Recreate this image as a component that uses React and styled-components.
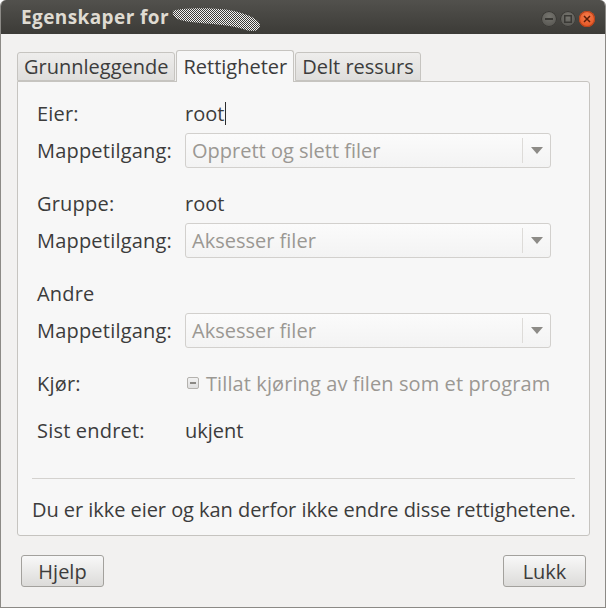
import React from "react";
import styled, { createGlobalStyle } from "styled-components";

const Global = createGlobalStyle`
  html, body { margin: 0; padding: 0; background: #ffffff; }
  body { font-family: "Open Sans", "Noto Sans", sans-serif; }
  * { box-sizing: border-box; }
`;

const Window = styled.div`
  width: 606px;
  height: 608px;
  display: flex;
  flex-direction: column;
  background: #f2f1f0;
  border: 1px solid #8c8a86;
  border-top: none;
  border-radius: 6px 6px 0 0;
  overflow: hidden;
`;

const TitleBar = styled.div`
  height: 34px;
  flex: none;
  display: flex;
  align-items: center;
  padding: 0 10px 0 20px;
  background: linear-gradient(#52514d, #3c3b37);
  color: #dfdbd2;
  font-weight: 700;
  font-size: 19px;
  white-space: nowrap;
`;

const Title = styled.span`
  letter-spacing: 0.4px;
`;

const Controls = styled.div`
  margin-left: auto;
  display: flex;
  gap: 3px;
  margin-top: 4px;
`;

const Ctl = styled.div`
  width: 16px;
  height: 16px;
  border-radius: 50%;
  display: flex;
  align-items: center;
  justify-content: center;
  background: ${(p) =>
    p.$close
      ? "radial-gradient(circle at 50% 35%, #f57b4b, #df4c1a)"
      : "radial-gradient(circle at 50% 35%, #76756f, #4f4e4a)"};
  box-shadow: inset 0 0 0 1px ${(p) => (p.$close ? "#b8421a" : "#3a3935")};
`;

const Body = styled.div`
  flex: 1;
  display: flex;
  flex-direction: column;
  padding: 15px 15px 20px 15px;
`;

const Tabs = styled.div`
  display: flex;
  align-items: flex-end;
  gap: 1px;
  padding-left: 1px;
  height: 32px;
`;

const Tab = styled.div`
  height: ${(p) => (p.$active ? "32px" : "29px")};
  padding: 0 6px;
  margin-bottom: ${(p) => (p.$active ? "-1px" : "0")};
  display: flex;
  align-items: center;
  font-size: 20px;
  white-space: nowrap;
  color: #3c3c3c;
  border: 1px solid #c6c4c0;
  border-bottom: ${(p) => (p.$active ? "none" : "1px solid #c6c4c0")};
  border-radius: 3px 3px 0 0;
  background: ${(p) =>
    p.$active ? "#f7f7f7" : "linear-gradient(#eeedec, #dfdedc)"};
  position: relative;
  z-index: ${(p) => (p.$active ? 1 : 0)};
`;

const Frame = styled.div`
  height: 455px;
  margin: 0 0 0 1px;
  border: 1px solid #c6c4c0;
  border-radius: 0 3px 3px 3px;
  background: #f7f7f7;
  display: flex;
  flex-direction: column;
`;

const Fields = styled.div`
  padding: 16px 38px 0 19px;
  display: flex;
  flex-direction: column;
`;

const Row = styled.div`
  display: grid;
  grid-template-columns: 148px 1fr;
  align-items: center;
  min-height: 30px;
  margin-top: ${(p) => p.$top || 0}px;
  font-size: 20px;
  white-space: nowrap;
  color: #3c3c3c;
`;

const Label = styled.span`
  letter-spacing: 0.2px;
`;

const Value = styled.span`
  display: flex;
  align-items: center;
`;

const Caret = styled.span`
  width: 1px;
  height: 23px;
  background: #2d2d2d;
  margin-left: 1px;
`;

const Combo = styled.div`
  height: 35px;
  display: flex;
  align-items: center;
  border: 1px solid #d2d0cd;
  border-radius: 3px;
  background: linear-gradient(#fbfbfb, #f3f3f3);
  color: #9b9893;
  font-size: 20px;
`;

const ComboText = styled.span`
  flex: 1;
  padding-left: 6px;
`;

const ComboButton = styled.div`
  width: 28px;
  align-self: stretch;
  display: flex;
  align-items: center;
  justify-content: center;
  border-left: 1px solid #dddbd8;
  margin: 4px 0;
`;

const Check = styled.span`
  width: 12px;
  height: 12px;
  border: 1px solid #b4b2ae;
  border-radius: 2px;
  background: linear-gradient(#f2f2f2, #dedede);
  display: inline-flex;
  align-items: center;
  justify-content: center;
  margin: 0 7px 0 2px;
  &::after {
    content: "";
    width: 6px;
    height: 2px;
    background: #8a8884;
  }
`;

const Disabled = styled.span`
  color: #9b9893;
  display: flex;
  align-items: center;
  letter-spacing: 0.1px;
`;

const Footer = styled.div`
  margin-top: auto;
  padding: 0 14px 0 14px;
  display: flex;
  flex-direction: column;
`;

const Rule = styled.div`
  height: 1px;
  background: #d4d2cf;
`;

const Message = styled.div`
  height: 48px;
  display: flex;
  align-items: center;
  margin-top: 6px;
  margin-bottom: 2px;
  font-size: 20px;
  letter-spacing: -0.05px;
  white-space: nowrap;
  color: #3c3c3c;
`;

const ButtonRow = styled.div`
  display: flex;
  justify-content: space-between;
  margin-top: 19px;
  padding: 0 4px 0 5px;
`;

const Button = styled.button`
  width: 83px;
  height: 32px;
  border: 1px solid #a3a19d;
  border-radius: 3px;
  background: linear-gradient(#f8f8f8, #dcdbd9);
  font-family: inherit;
  font-size: 20px;
  color: #3c3c3c;
  padding: 0;
`;

function Redaction() {
  return (
    <svg width="92" height="26" viewBox="0 0 92 26" style={{ marginLeft: 2, marginTop: 6 }}>
      <defs>
        <pattern id="chk" width="2" height="2" patternUnits="userSpaceOnUse">
          <rect width="2" height="2" fill="#f2f2f2" />
          <rect width="1" height="1" fill="#3c3b37" />
          <rect x="1" y="1" width="1" height="1" fill="#3c3b37" />
        </pattern>
      </defs>
      <path
        d="M2 4 C 4 1, 40 0, 58 3 C 74 6, 90 12, 89 19 C 88 25, 80 25, 72 22 C 60 18, 40 17, 20 15 C 8 14, 0 10, 2 4 Z"
        fill="url(#chk)"
      />
    </svg>
  );
}

function Arrow() {
  return (
    <svg width="12" height="7" viewBox="0 0 12 7">
      <path d="M0 0 H12 L6 7 Z" fill="#8d8b87" />
    </svg>
  );
}

function Combobox({ text }) {
  return (
    <Combo>
      <ComboText>{text}</ComboText>
      <ComboButton>
        <Arrow />
      </ComboButton>
    </Combo>
  );
}

export default function App() {
  return (
    <>
      <Global />
      <Window>
        <TitleBar>
          <Title>Egenskaper for</Title>
          <Redaction />
          <Controls>
            <Ctl>
              <svg width="8" height="8" viewBox="0 0 8 8">
                <rect x="0" y="3" width="8" height="2" fill="#3a3935" />
              </svg>
            </Ctl>
            <Ctl>
              <svg width="8" height="8" viewBox="0 0 8 8">
                <rect x="0.75" y="0.75" width="6.5" height="6.5" fill="none" stroke="#3a3935" strokeWidth="1.5" />
              </svg>
            </Ctl>
            <Ctl $close>
              <svg width="8" height="8" viewBox="0 0 8 8">
                <path d="M1 1 L7 7 M7 1 L1 7" stroke="#5a1d08" strokeWidth="1.5" />
              </svg>
            </Ctl>
          </Controls>
        </TitleBar>
        <Body>
          <Tabs>
            <Tab>Grunnleggende</Tab>
            <Tab $active>Rettigheter</Tab>
            <Tab>Delt ressurs</Tab>
          </Tabs>
          <Frame>
            <Fields>
              <Row>
                <Label>Eier:</Label>
                <Value>
                  root
                  <Caret />
                </Value>
              </Row>
              <Row $top={5}>
                <Label>Mappetilgang:</Label>
                <Combobox text="Opprett og slett filer" />
              </Row>
              <Row $top={20}>
                <Label>Gruppe:</Label>
                <Value>root</Value>
              </Row>
              <Row $top={5}>
                <Label>Mappetilgang:</Label>
                <Combobox text="Aksesser filer" />
              </Row>
              <Row $top={20}>
                <Label>Andre</Label>
              </Row>
              <Row $top={5}>
                <Label>Mappetilgang:</Label>
                <Combobox text="Aksesser filer" />
              </Row>
              <Row $top={20}>
                <Label>Kjør:</Label>
                <Disabled>
                  <Check />
                  Tillat kjøring av filen som et program
                </Disabled>
              </Row>
              <Row $top={17}>
                <Label>Sist endret:</Label>
                <Value>ukjent</Value>
              </Row>
            </Fields>
            <Footer>
              <Rule />
              <Message>Du er ikke eier og kan derfor ikke endre disse rettighetene.</Message>
            </Footer>
          </Frame>
          <ButtonRow>
            <Button>Hjelp</Button>
            <Button>Lukk</Button>
          </ButtonRow>
        </Body>
      </Window>
    </>
  );
}
